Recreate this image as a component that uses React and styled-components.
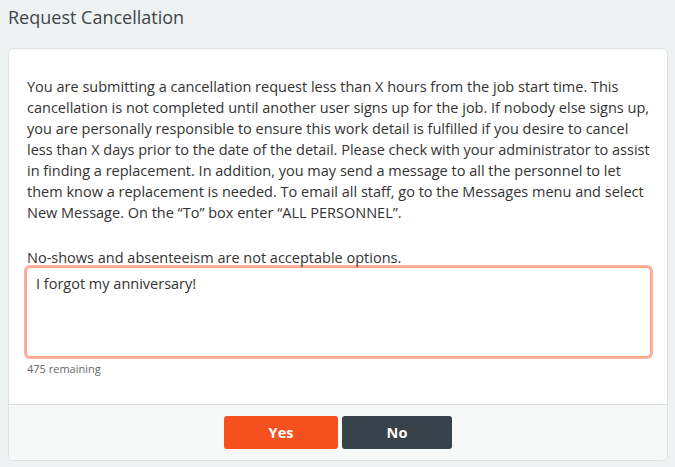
import React from "react";
import styled, { createGlobalStyle } from "styled-components";

const Global = createGlobalStyle`
  html, body { margin: 0; padding: 0; }
  body {
    background: #eff2f3;
    font-family: "Open Sans", "Noto Sans", sans-serif;
    color: #333;
  }
`;

const Page = styled.div`
  padding: 0 7px 0 8px;
`;

const Title = styled.h1`
  margin: 0;
  padding: 5px 0 0 0;
  height: 48px;
  box-sizing: border-box;
  font-size: 18px;
  font-weight: 400;
  color: #3f4548;
  line-height: 24px;
`;

const Card = styled.div`
  background: #fff;
  border: 1px solid #dde2e4;
  border-radius: 6px;
  overflow: hidden;
`;

const Body = styled.div`
  padding: 27px 16px 7px 17px;
`;

const Text = styled.p`
  margin: 0 0 ${(p) => p.$gap || 0}px 0;
  padding: 0 0 0 1px;
  font-size: 14.5px;
  line-height: 21px;
  color: #333;
  white-space: nowrap;
`;

const Line = styled.span`
  display: block;
`;

const Area = styled.textarea`
  display: block;
  width: 100%;
  box-sizing: border-box;
  height: 90px;
  margin-top: -1px;
  resize: none;
  border: 1px solid #f5a185;
  border-radius: 4px;
  box-shadow: 0 0 0 2px #f9b39c;
  padding: 6px 9px;
  font-family: "Open Sans", "Noto Sans", sans-serif;
  font-size: 14.5px;
  line-height: 20px;
  color: #333;
  outline: none;
`;

const Counter = styled.div`
  margin-top: 5px;
  padding-left: 1px;
  font-size: 11px;
  line-height: 14px;
  color: #666;
`;

const Footer = styled.div`
  margin-top: 21px;
  border-top: 1px solid #dde2e4;
  background: #f7f8f8;
  padding: 11px 0 11px;
  display: flex;
  justify-content: center;
  gap: 4px;
`;

const Button = styled.button`
  height: 33px;
  width: ${(p) => p.$w}px;
  border: none;
  border-radius: 3px;
  background: ${(p) => p.$bg};
  color: #fff;
  font-family: "Open Sans", "Noto Sans", sans-serif;
  font-weight: 700;
  font-size: 14.5px;
  cursor: pointer;
`;

const lines = [
  "You are submitting a cancellation request less than X hours from the job start time. This",
  "cancellation is not completed until another user signs up for the job. If nobody else signs up,",
  "you are personally responsible to ensure this work detail is fulfilled if you desire to cancel",
  "less than X days prior to the date of the detail. Please check with your administrator to assist",
  "in finding a replacement. In addition, you may send a message to all the personnel to let",
  "them know a replacement is needed. To email all staff, go to the Messages menu and select",
  "New Message. On the “To” box enter “ALL PERSONNEL”.",
];

export default function App() {
  return (
    <Page>
      <Global />
      <Title>Request Cancellation</Title>
      <Card>
        <Body>
          <Text $gap={24}>
            {lines.map((l) => (
              <Line key={l}>{l}</Line>
            ))}
          </Text>
          <Text>No-shows and absenteeism are not acceptable options.</Text>
          <Area defaultValue="I forgot my anniversary!" />
          <Counter>475 remaining</Counter>
        </Body>
        <Footer>
          <Button $bg="#f5511f" $w={114}>Yes</Button>
          <Button $bg="#37424a" $w={110}>No</Button>
        </Footer>
      </Card>
    </Page>
  );
}
